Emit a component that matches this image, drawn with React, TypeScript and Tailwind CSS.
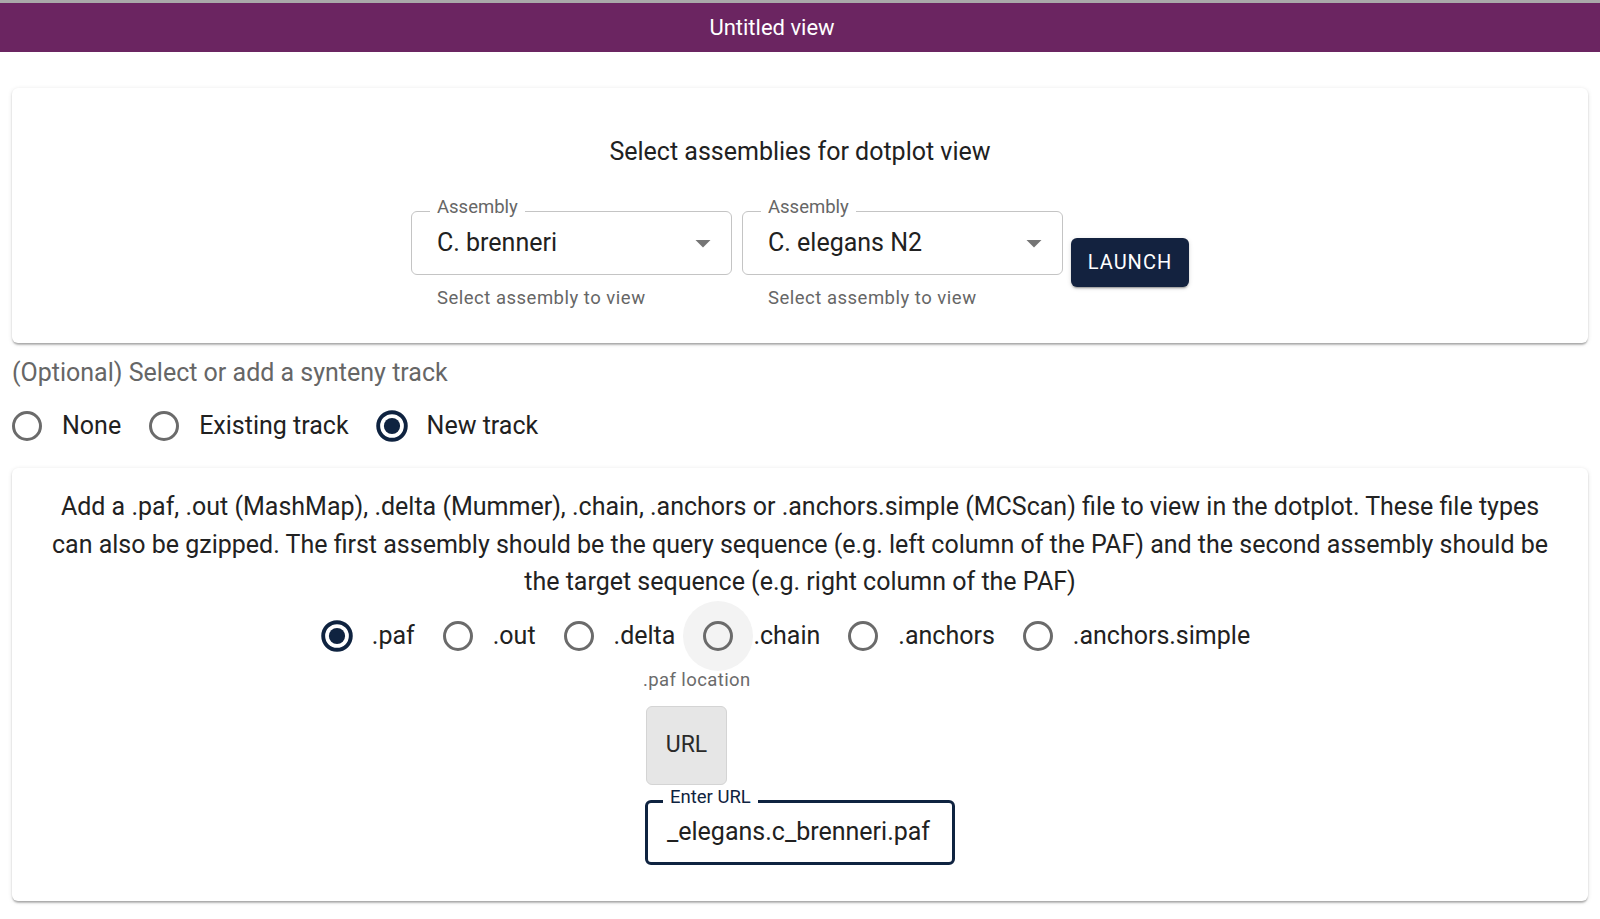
import { ReactNode } from "react";

const NAVY = "#0f2340";

function RadioIcon({ checked }: { checked?: boolean }) {
  return (
    <svg width="36" height="36" viewBox="0 0 24 24">
      {checked ? (
        <>
          <circle cx="12" cy="12" r="9.2" fill="none" stroke={NAVY} strokeWidth="2.6" />
          <circle cx="12" cy="12" r="5.4" fill={NAVY} />
        </>
      ) : (
        <circle cx="12" cy="12" r="9" fill="none" stroke="#6b6b6b" strokeWidth="2" />
      )}
    </svg>
  );
}

function RadioOption({ label, checked, hover }: { label: string; checked?: boolean; hover?: boolean }) {
  return (
    <label className="ml-[-20px] mr-[28px] flex items-center">
      <span
        className={`flex h-[70px] w-[70px] shrink-0 items-center justify-center rounded-full ${
          hover ? "bg-[#f3f3f3]" : ""
        }`}
      >
        <RadioIcon checked={checked} />
      </span>
      <span className="text-[25px] leading-[36px] text-[#212121] whitespace-nowrap">{label}</span>
    </label>
  );
}

function AssemblySelect({ value }: { value: string }) {
  return (
    <div className="w-[321px]">
      <div className="relative flex h-[64px] items-center rounded-[6px] border border-[#c4c4c4] pl-[25px] pr-[10px]">
        <span className="absolute left-[18px] top-[-17px] bg-white px-[7px] text-[18.5px] leading-[24px] text-[#666]">
          Assembly
        </span>
        <span className="flex-1 text-[25px] leading-[32px] text-[#212121]">{value}</span>
        <svg width="36" height="36" viewBox="0 0 24 24">
          <path d="M7 10l5 5 5-5z" fill="#757575" />
        </svg>
      </div>
      <div className="mt-[8px] pl-[26px] text-[18.5px] leading-[30px] tracking-[0.5px] text-[#666]">
        Select assembly to view
      </div>
    </div>
  );
}

function Card({ children, className }: { children: ReactNode; className?: string }) {
  return (
    <section
      className={`rounded-[6px] bg-white shadow-[0_3px_2px_-1px_rgba(0,0,0,0.2),0_1px_2px_0_rgba(0,0,0,0.14),0_1px_5px_0_rgba(0,0,0,0.1)] ${
        className ?? ""
      }`}
    >
      {children}
    </section>
  );
}

export default function App() {
  return (
    <div className="min-h-screen bg-white font-[Roboto,'Liberation_Sans',sans-serif]">
      <div className="h-[3px] bg-[#a9a9a9]" />
      <header className="flex h-[49px] items-center justify-center bg-[#6b2561] pr-[56px] text-[22px] text-white">
        Untitled view
      </header>

      <div className="px-[12px]">
        <Card className="mt-[36px] pb-[30px] pt-[48px]">
          <h2 className="text-center text-[25px] leading-[32px] text-[#212121]">Select assemblies for dotplot view</h2>
          <div className="mt-[43px] flex items-center justify-center">
            <AssemblySelect value="C. brenneri" />
            <div className="ml-[10px]">
              <AssemblySelect value="C. elegans N2" />
            </div>
            <button className="ml-[8px] h-[49px] w-[118px] rounded-[6px] bg-[#13223f] text-[20px] tracking-[1px] text-white shadow-[0_3px_1px_-2px_rgba(0,0,0,0.2),0_2px_2px_0_rgba(0,0,0,0.14),0_1px_5px_0_rgba(0,0,0,0.12)]">
              LAUNCH
            </button>
          </div>
        </Card>

        <p className="mt-[12px] text-[25px] leading-[36px] text-[#666]">(Optional) Select or add a synteny track</p>

        <div className="flex h-[70px] items-center">
          <RadioOption label="None" />
          <RadioOption label="Existing track" />
          <RadioOption label="New track" checked />
        </div>

        <Card className="mt-[7px] px-[30px] pb-[36px] pt-[20px]">
          <p className="text-center text-[25px] leading-[37.5px] text-[#222]">
            Add a .paf, .out (MashMap), .delta (Mummer), .chain, .anchors or .anchors.simple (MCScan) file to view in
            the dotplot. These file types can also be gzipped. The first assembly should be the query sequence (e.g.
            left column of the PAF) and the second assembly should be the target sequence (e.g. right column of the
            PAF)
          </p>

          <div className="flex h-[70px] items-center justify-center">
            <RadioOption label=".paf" checked />
            <RadioOption label=".out" />
            <RadioOption label=".delta" />
            <RadioOption label=".chain" hover />
            <RadioOption label=".anchors" />
            <RadioOption label=".anchors.simple" />
          </div>

          <div className="mx-auto w-[310px]">
            <div className="ml-[-2px] text-[18.5px] leading-[18px] tracking-[0.4px] text-[#6b6b6b]">.paf location</div>
            <button className="ml-[1px] mt-[17px] flex h-[79px] w-[81px] items-center justify-center rounded-[6px] border border-[#d4d4d4] bg-[#e6e6e6] text-[23px] text-[#2a2a2a]">
              URL
            </button>
            <div className="relative mt-[15px] h-[65px] rounded-[6px] border-[3px] border-[#0f2340]">
              <span className="absolute left-[15px] top-[-18px] bg-white px-[7px] text-[18.5px] leading-[24px] text-[#0f2340]">
                Enter URL
              </span>
              <div className="flex h-full items-center overflow-hidden px-[19px]">
                <span className="whitespace-nowrap text-[25px] leading-[32px] text-[#212121]">
                  _elegans.c_brenneri.paf
                </span>
              </div>
            </div>
          </div>
        </Card>
      </div>
    </div>
  );
}
